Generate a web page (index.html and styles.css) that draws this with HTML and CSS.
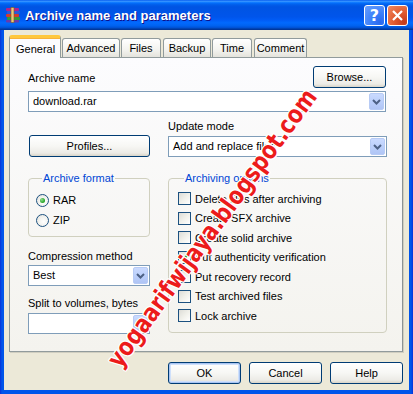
FILE: index.html
```html
<!DOCTYPE html>
<html lang="en">

<head>
    <meta charset="UTF-8">
    <meta name="viewport" content="width=device-width, initial-scale=1.0">
    <title>Archive name and parameters</title>
    <link rel="stylesheet" href="styles.css">
</head>

<body>
    <div class="window">
        <div class="titlebar">
            <svg class="app-icon" width="16" height="16" viewBox="0 0 16 16">
                <rect x="1" y="1" width="13" height="3" rx="1" fill="#b0228c" />
                <rect x="2" y="4" width="13" height="3" rx="1" fill="#2a5bd7" />
                <rect x="1" y="7" width="13" height="3" rx="1" fill="#d63a2a" />
                <rect x="2" y="10" width="13" height="3" rx="1" fill="#2f9a3a" />
                <rect x="1" y="13" width="13" height="2.5" rx="1" fill="#6a3aa8" />
                <rect x="6" y="0.5" width="3" height="15" fill="#e9c77a" stroke="#7a5a20" stroke-width="0.6" />
            </svg>
            <span class="title">Archive name and parameters</span>
            <div class="title-buttons">
                <span class="tbtn help">?</span>
                <span class="tbtn close">
                    <svg width="19" height="19" viewBox="0 0 19 19">
                        <path d="M5 5 L14 14 M14 5 L5 14" stroke="#fff" stroke-width="2.2" />
                    </svg>
                </span>
            </div>
        </div>

        <div class="client">
            <div class="tabs">
                <span class="tab active">General</span>
                <span class="tab">Advanced</span>
                <span class="tab">Files</span>
                <span class="tab">Backup</span>
                <span class="tab">Time</span>
                <span class="tab">Comment</span>
            </div>

            <div class="panel">
                <div class="row-name">
                    <span class="label">Archive name</span>
                    <span class="btn browse">Browse...</span>
                </div>
                <div class="combo name-combo">
                    <span class="combo-text">download.rar</span>
                    <span class="drop"><svg width="9" height="6" viewBox="0 0 9 6"><path d="M1 1 L4.5 4.5 L8 1" stroke="#4d6185" stroke-width="2" fill="none" /></svg></span>
                </div>

                <div class="cols row-mode">
                    <span class="btn profiles">Profiles...</span>
                    <div>
                        <div class="label">Update mode</div>
                        <div class="combo">
                            <span class="combo-text">Add and replace files</span>
                            <span class="drop"><svg width="9" height="6" viewBox="0 0 9 6"><path d="M1 1 L4.5 4.5 L8 1" stroke="#4d6185" stroke-width="2" fill="none" /></svg></span>
                        </div>
                    </div>
                </div>

                <div class="cols row-groups">
                    <div>
                        <fieldset class="group format">
                            <legend>Archive format</legend>
                            <div class="option"><span class="radio checked"></span>RAR</div>
                            <div class="option"><span class="radio"></span>ZIP</div>
                        </fieldset>
                        <div class="label method-label">Compression method</div>
                        <div class="combo">
                            <span class="combo-text">Best</span>
                            <span class="drop"><svg width="9" height="6" viewBox="0 0 9 6"><path d="M1 1 L4.5 4.5 L8 1" stroke="#4d6185" stroke-width="2" fill="none" /></svg></span>
                        </div>
                        <div class="label split-label">Split to volumes, bytes</div>
                        <div class="combo">
                            <span class="combo-text"></span>
                            <span class="drop"><svg width="9" height="6" viewBox="0 0 9 6"><path d="M1 1 L4.5 4.5 L8 1" stroke="#4d6185" stroke-width="2" fill="none" /></svg></span>
                        </div>
                    </div>
                    <fieldset class="group options">
                        <legend>Archiving options</legend>
                        <div class="check-row"><span class="check"></span>Delete files after archiving</div>
                        <div class="check-row"><span class="check"></span>Create SFX archive</div>
                        <div class="check-row"><span class="check"></span>Create solid archive</div>
                        <div class="check-row"><span class="check checked"><svg width="11" height="11" viewBox="0 0 11 11"><path d="M2 5 L4.5 7.5 L9 2.5" stroke="#21a121" stroke-width="2" fill="none" /></svg></span>Put authenticity verification</div>
                        <div class="check-row"><span class="check"></span>Put recovery record</div>
                        <div class="check-row"><span class="check"></span>Test archived files</div>
                        <div class="check-row"><span class="check"></span>Lock archive</div>
                    </fieldset>
                </div>
            </div>

            <div class="buttons">
                <span class="btn default">OK</span>
                <span class="btn">Cancel</span>
                <span class="btn">Help</span>
            </div>
        </div>
    </div>
    <div class="watermark">yogaarifwijaya.blogspot.com</div>
</body>

</html>
```

FILE: styles.css
```css
* {
    margin: 0;
    padding: 0;
    box-sizing: border-box;
}

body {
    font-family: "Liberation Sans", Arial, sans-serif;
    font-size: 11px;
    color: #000;
    background: #ece9d8;
    position: relative;
}

.window {
    width: 413px;
    height: 394px;
    display: flex;
    flex-direction: column;
    background: linear-gradient(90deg, #0831d9 0, #0055ea 2px, #0055ea 411px, #0831d9 413px);
}

/* title bar */
.titlebar {
    height: 30px;
    display: flex;
    align-items: center;
    padding: 0 5px;
    background: linear-gradient(180deg, #0058ee 0%, #3a93ff 4%, #288eff 6%, #127dff 8%, #036ffc 10%, #0262ee 14%, #0057e5 20%, #0054e3 24%, #0055eb 56%, #005bf5 66%, #026afe 76%, #0062ef 86%, #0052d6 92%, #0040ab 96%, #003092 100%);
}

.app-icon {
    flex: none;
}

.title {
    margin-left: 4px;
    color: #fff;
    font-weight: bold;
    font-size: 13px;
    text-shadow: 1px 1px #0f1089;
}

.title-buttons {
    margin-left: auto;
    display: flex;
    gap: 2px;
    margin-top: 1px;
}

.tbtn {
    width: 21px;
    height: 21px;
    border: 1px solid #fff;
    border-radius: 3px;
    display: flex;
    align-items: center;
    justify-content: center;
    color: #fff;
}

.help {
    background: radial-gradient(circle at 80% 85%, #2a68ee 0, #3a7ffa 40%, #6a9ffd 100%);
    font-weight: bold;
    font-size: 16px;
    font-family: "DejaVu Sans", sans-serif;
}

.close {
    background: radial-gradient(circle at 85% 85%, #c33a1b 0, #e15b30 45%, #ef8a62 100%);
}

/* client area */
.client {
    flex: 1;
    margin: 0 4px 4px 4px;
    background: #ece9d8;
    padding: 5px 6px 0 5px;
    display: flex;
    flex-direction: column;
}

.tabs {
    display: flex;
    height: 22px;
    position: relative;
    z-index: 1;
}

.tab {
    margin-top: 3px;
    height: 19px;
    padding: 3px 6px 0;
    min-width: 40px;
    text-align: center;
    border: 1px solid #919b9c;
    border-bottom: none;
    border-radius: 3px 3px 0 0;
    background: linear-gradient(180deg, #fff 0%, #f3f3ef 60%, #e4e3dc 100%);
    margin-right: 1px;
}

.tab.active {
    margin-top: 0;
    height: 23px;
    padding-top: 5px;
    width: 52px;
    margin-right: 1px;
    background: #fcfcfe;
    border-top: 3px solid #ffc83c;
    box-shadow: inset 0 1px #f8b33a;
}

.tab:nth-child(2) {
    width: 58px;
    padding: 3px 0 0;
}

.tab:nth-child(3) {
    width: 40px;
}

.tab:nth-child(4) {
    width: 48px;
    margin-left: 1px;
    padding: 3px 0 0;
}

.tab:nth-child(5) {
    width: 40px;
}

.tab:nth-child(6) {
    width: 53px;
    margin-left: 1px;
    padding: 3px 0 0;
}

.panel {
    height: 295px;
    border: 1px solid #919b9c;
    border-right-color: #8c9394;
    background: linear-gradient(180deg, #fcfcfe 0%, #f4f3ee 100%);
    padding: 8px 16px 0 18px;
    box-shadow: 1px 1px #d0cec0;
}

.label {
    line-height: 13px;
    white-space: nowrap;
}

.row-name {
    display: flex;
    justify-content: space-between;
    align-items: flex-end;
    height: 22px;
}

.row-name .label {
    margin-bottom: 3px;
}

.btn {
    height: 22px;
    border: 1px solid #003c74;
    border-radius: 3px;
    background: linear-gradient(180deg, #ffffff 0%, #f7f7f4 50%, #ecebe6 85%, #d8d4c8 100%);
    display: flex;
    align-items: center;
    justify-content: center;
    width: 73px;
}

.btn.default {
    box-shadow: inset 0 0 0 1px #a9c5f2, inset 0 0 0 2px #cfe0fb;
}

.profiles {
    width: 121px;
    margin-left: 1px;
    align-self: end;
}

.combo {
    height: 21px;
    border: 1px solid #7f9db9;
    background: #fff;
    display: flex;
    padding: 1px;
}

.name-combo {
    margin-top: 3px;
}

.combo-text {
    flex: 1;
    padding-left: 3px;
    line-height: 17px;
}

.drop {
    width: 15px;
    border: 1px solid #b7cbf5;
    border-radius: 2px;
    background: linear-gradient(180deg, #cadaff 0%, #bcd0fb 50%, #b0c5f5 100%);
    display: flex;
    align-items: center;
    justify-content: center;
}

.cols {
    display: grid;
    grid-template-columns: 122px 219px;
    column-gap: 18px;
}

.row-mode {
    margin-top: 8px;
}

.row-mode .combo {
    margin-top: 3px;
}

.row-groups {
    margin-top: 15px;
    align-items: start;
}

.group {
    border: 1px solid #d0d0bf;
    border-radius: 4px;
    min-width: 0;
}

.group legend {
    color: #0046d5;
    line-height: 13px;
    padding: 0 1px;
    margin-left: 6px;
}

.format {
    padding: 5px 6px 6px 7px;
}

.option {
    height: 20px;
    display: flex;
    align-items: center;
    gap: 4px;
}

.radio {
    width: 13px;
    height: 13px;
    border: 1px solid #1c5180;
    border-radius: 50%;
    background: radial-gradient(circle at 60% 60%, #fff 0, #f2f2ee 50%, #dcdcd7 100%);
    display: flex;
    align-items: center;
    justify-content: center;
}

.radio.checked::after {
    content: "";
    width: 5px;
    height: 5px;
    border-radius: 50%;
    background: radial-gradient(circle at 35% 35%, #8fdd8f 0, #21a121 70%);
}

.method-label {
    margin-top: 13px;
}

.method-label+.combo {
    margin-top: 2px;
}

.split-label {
    margin-top: 11px;
}

.split-label+.combo {
    margin-top: 3px;
}

.options {
    height: 161px;
    padding: 4px 6px 0 9px;
}

.check-row {
    height: 19.5px;
    display: flex;
    align-items: center;
    gap: 4px;
    white-space: nowrap;
}

.check {
    width: 13px;
    height: 13px;
    flex: none;
    border: 1px solid #1c5180;
    background: linear-gradient(135deg, #dcdcd7 0%, #f0f0ea 50%, #fff 100%);
    display: flex;
    align-items: center;
    justify-content: center;
}

.buttons {
    margin-top: 10px;
    display: flex;
    justify-content: flex-end;
    gap: 8px;
}

.buttons .btn {
    width: 73px;
}

.watermark {
    position: absolute;
    left: 212px;
    top: 228px;
    transform: translate(-50%, -50%) rotate(-54deg) scaleX(0.92);
    white-space: nowrap;
    font-family: "DejaVu Sans Condensed", "DejaVu Sans", sans-serif;
    font-weight: bold;
    font-size: 25px;
    color: #ec1b1b;
    text-shadow: 1px 0 #fff, -1px 0 #fff, 0 1px #fff, 0 -1px #fff, 1px 1px #fff, -1px -1px #fff, 1px -1px #fff, -1px 1px #fff;
}
```
